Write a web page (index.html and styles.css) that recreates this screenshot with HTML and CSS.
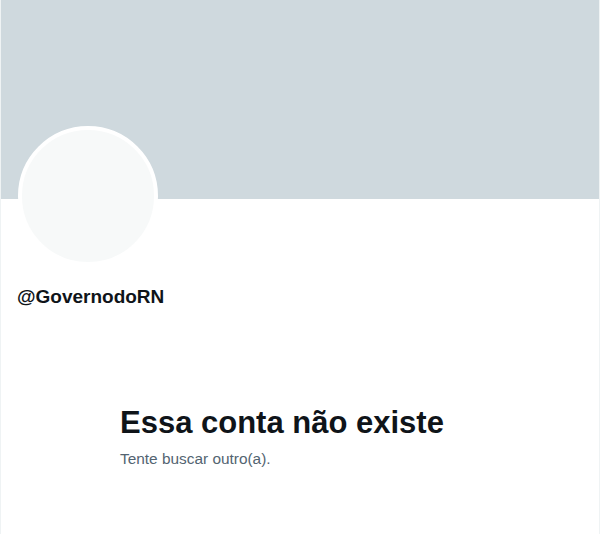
FILE: index.html
```html
<!DOCTYPE html>
<html lang="pt-BR">
<head>
    <meta charset="UTF-8">
    <meta name="viewport" content="width=device-width, initial-scale=1.0">
    <title>Perfil / Twitter</title>
    <link rel="stylesheet" href="styles.css">
</head>
<body>
    <!-- Profile column -->
    <main class="column">
        <div class="banner"></div>

        <div class="profile-head">
            <div class="avatar"></div>
            <div class="handle">@GovernodoRN</div>
        </div>

        <!-- Empty state -->
        <div class="empty">
            <h2 class="empty-title">Essa conta não existe</h2>
            <p class="empty-text">Tente buscar outro(a).</p>
        </div>
    </main>
</body>
</html>
```

FILE: styles.css
```css
/* General body styles */
body {
    margin: 0;
    padding: 0;
    font-family: 'Liberation Sans', Arial, sans-serif;
    background-color: #fff;
    color: #0f1419;
}

/* Main column with side borders */
.column {
    width: 598px;
    min-height: 534px;
    border-left: 1px solid #eff3f4;
    border-right: 1px solid #eff3f4;
}

.banner {
    height: 199px;
    background-color: #cfd9de;
}

.profile-head {
    padding: 0 16px;
}

.avatar {
    width: 140px;
    height: 140px;
    box-sizing: border-box;
    margin-left: 1px;
    margin-top: -73px;
    border: 4px solid #fff;
    border-radius: 50%;
    background-color: #f7f9f9;
}

.handle {
    margin-top: 19px;
    font-size: 19px;
    line-height: 24px;
    font-weight: 700;
}

/* Empty state block */
.empty {
    max-width: 360px;
    margin: 96px auto 0;
    padding: 0 20px;
}

.empty-title {
    margin: 0;
    font-size: 31px;
    line-height: 36px;
    font-weight: 800;
}

.empty-text {
    margin: 8px 0 0;
    font-size: 15.4px;
    line-height: 20px;
    color: #536471;
}
```
